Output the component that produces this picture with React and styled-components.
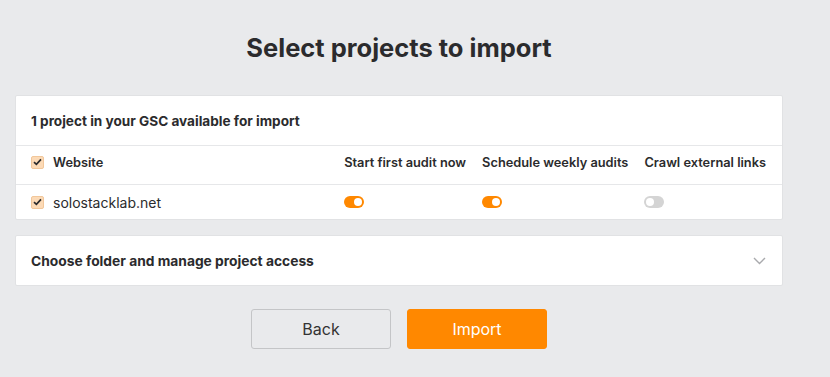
import React from "react";
import styled, { createGlobalStyle } from "styled-components";

const Global = createGlobalStyle`
  html, body { margin: 0; padding: 0; background: #e9eaec; }
  body { font-family: Inter, "Noto Sans", sans-serif; color: #2b2b2d; }
  * { box-sizing: border-box; }
`;

const Page = styled.div`
  width: 830px;
  height: 377px;
  padding: 0 47px 0 15px;
  display: flex;
  flex-direction: column;
`;

const Title = styled.h1`
  margin: 0;
  padding-top: 33px;
  height: 95px;
  text-align: center;
  font-size: 25.5px;
  font-weight: 700;
  line-height: 30px;
  color: #2b2b2d;
`;

const Card = styled.section`
  background: #fff;
  border: 1px solid #e1e2e4;
  border-radius: 2px;
`;

const CardHeader = styled.div`
  height: 49px;
  padding: 0 16px 0 15px;
  display: flex;
  align-items: center;
  justify-content: space-between;
  font-size: ${(p) => (p.$size || 13.6)}px;
  font-weight: 700;
  border-bottom: ${(p) => (p.$divided ? "1px solid #e6e7e9" : "none")};
  box-sizing: content-box;
`;

const Grid = styled.div`
  display: grid;
  grid-template-columns: 1fr auto auto auto;
`;

const Cell = styled.div`
  height: ${(p) => (p.$head ? "39px" : "34px")};
  display: flex;
  align-items: center;
  gap: 9px;
  padding: 0 16px ${(p) => (p.$head ? "6px" : "0")} 0;
  font-size: ${(p) => (p.$head ? "12.8px" : "14px")};
  font-weight: ${(p) => (p.$head ? 600 : 400)};
  border-bottom: ${(p) => (p.$head ? "1px solid #e6e7e9" : "none")};
  white-space: nowrap;
  &:nth-child(4n + 1) {
    padding-left: 15px;
    padding-right: 0;
  }
  &:nth-child(4n + 2) {
    padding-left: 16px;
  }
`;

const Box = styled.span`
  width: 13px;
  height: 13px;
  border-radius: 2px;
  background: #fcdab6;
  border: 1px solid #f2c79a;
  display: inline-flex;
  align-items: center;
  justify-content: center;
  flex: none;
`;

const Toggle = styled.span`
  width: 20px;
  height: 12px;
  border-radius: 6px;
  background: ${(p) => (p.$on ? "#ff8800" : "#d4d4d4")};
  position: relative;
  display: inline-block;
  &::after {
    content: "";
    position: absolute;
    top: 2px;
    left: ${(p) => (p.$on ? "10px" : "2px")};
    width: 8px;
    height: 8px;
    border-radius: 50%;
    background: #fff;
  }
`;

const Spacer = styled.div`
  height: 15px;
`;

const Buttons = styled.div`
  display: flex;
  justify-content: center;
  gap: 16px;
  padding-top: 23px;
`;

const Button = styled.button`
  width: 140px;
  height: 40px;
  border-radius: 3px;
  font-family: Inter, sans-serif;
  font-size: 16px;
  cursor: pointer;
  border: 1px solid ${(p) => (p.$primary ? "#ff8800" : "#c4c5c7")};
  background: ${(p) => (p.$primary ? "#ff8800" : "transparent")};
  color: ${(p) => (p.$primary ? "#fff" : "#333")};
`;

const Check = () => (
  <Box>
    <svg width="9" height="8" viewBox="0 0 9 8">
      <path d="M1 4.2 L3.4 6.4 L8 1.4" fill="none" stroke="#2b2b2d" strokeWidth="1.7" />
    </svg>
  </Box>
);

const Chevron = () => (
  <svg width="13" height="8" viewBox="0 0 13 8">
    <path d="M1 1 L6.5 6.5 L12 1" fill="none" stroke="#a9aaad" strokeWidth="1.4" />
  </svg>
);

export default function App() {
  return (
    <>
      <Global />
      <Page>
        <Title>Select projects to import</Title>
        <Card>
          <CardHeader $divided>1 project in your GSC available for import</CardHeader>
          <Grid>
            <Cell $head><Check />Website</Cell>
            <Cell $head>Start first audit now</Cell>
            <Cell $head>Schedule weekly audits</Cell>
            <Cell $head>Crawl external links</Cell>
            <Cell><Check />solostacklab.net</Cell>
            <Cell><Toggle $on /></Cell>
            <Cell><Toggle $on /></Cell>
            <Cell><Toggle /></Cell>
          </Grid>
        </Card>
        <Spacer />
        <Card>
          <CardHeader $size={13.8}>
            Choose folder and manage project access
            <Chevron />
          </CardHeader>
        </Card>
        <Buttons>
          <Button>Back</Button>
          <Button $primary>Import</Button>
        </Buttons>
      </Page>
    </>
  );
}
